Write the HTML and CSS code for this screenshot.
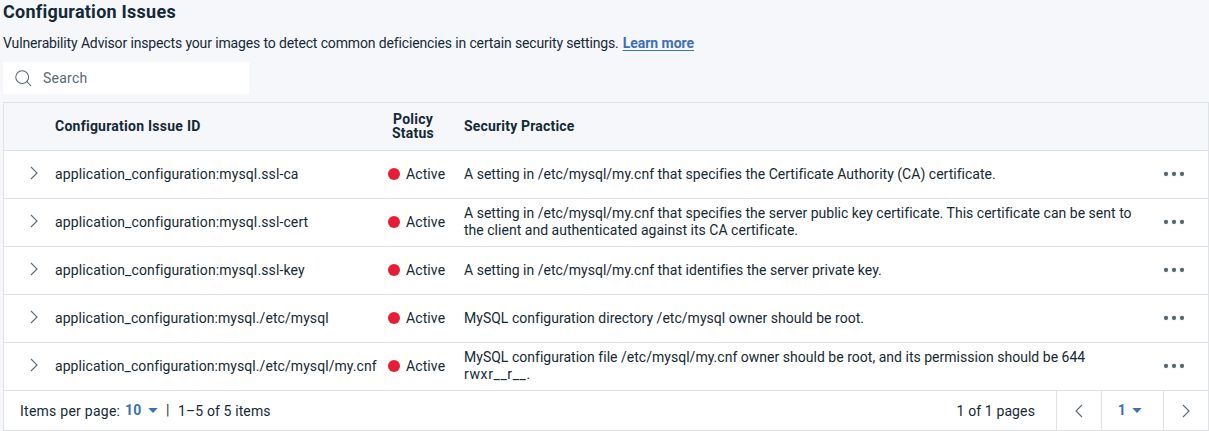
FILE: index.html
```html
<!DOCTYPE html>
<html lang="en">
<head>
<meta charset="utf-8">
<title>Configuration Issues</title>
<link rel="stylesheet" href="styles.css">
</head>
<body>
<svg class="defs" width="0" height="0">
  <symbol id="right" viewBox="0 0 8 14"><path d="M1 1l6 6-6 6"/></symbol>
  <symbol id="left" viewBox="0 0 8 14"><path d="M7 1L1 7l6 6"/></symbol>
  <symbol id="caret" viewBox="0 0 10 5"><path d="M0.3 0h9.4L5 5z"/></symbol>
  <symbol id="dots" viewBox="0 0 22 6"><circle cx="3" cy="3" r="2.15"/><circle cx="11" cy="3" r="2.15"/><circle cx="19" cy="3" r="2.15"/></symbol>
</svg>
<main class="page">
  <h1 class="title">Configuration Issues</h1>
  <p class="intro"><span class="intro-text">Vulnerability Advisor inspects your images to detect common deficiencies in certain security settings.</span><a class="link" href="#">Learn more</a></p>
  <div class="search">
    <svg class="glass" viewBox="0 0 18 18"><circle cx="7.6" cy="7.5" r="6.8"/><path d="M12.4 12.3l4.6 4.6"/></svg>
    <span>Search</span>
  </div>
  <section class="table">
    <div class="row head"><span></span><span>Configuration Issue ID</span><span class="policy">Policy<br>Status</span><span class="practice-head">Security Practice</span><span></span></div>
    <div class="row"><svg class="chev"><use href="#right"/></svg><span class="id">application_configuration:mysql.ssl-ca</span><span class="status">Active</span><span class="practice">A setting in /etc/mysql/my.cnf that specifies the Certificate Authority (CA) certificate.</span><svg class="dots"><use href="#dots"/></svg></div>
    <div class="row"><svg class="chev"><use href="#right"/></svg><span class="id">application_configuration:mysql.ssl-cert</span><span class="status">Active</span><span class="practice double">A setting in /etc/mysql/my.cnf that specifies the server public key certificate. This certificate can be sent to<br>the client and authenticated against its CA certificate.</span><svg class="dots"><use href="#dots"/></svg></div>
    <div class="row"><svg class="chev"><use href="#right"/></svg><span class="id">application_configuration:mysql.ssl-key</span><span class="status">Active</span><span class="practice">A setting in /etc/mysql/my.cnf that identifies the server private key.</span><svg class="dots"><use href="#dots"/></svg></div>
    <div class="row"><svg class="chev"><use href="#right"/></svg><span class="id path">application_configuration:mysql./etc/mysql</span><span class="status">Active</span><span class="practice">MySQL configuration directory /etc/mysql owner should be root.</span><svg class="dots"><use href="#dots"/></svg></div>
    <div class="row"><svg class="chev"><use href="#right"/></svg><span class="id path">application_configuration:mysql./etc/mysql/my.cnf</span><span class="status">Active</span><span class="practice double">MySQL configuration file /etc/mysql/my.cnf owner should be root, and its permission should be 644<br><span class="mode">rwxr__r__.</span></span><svg class="dots"><use href="#dots"/></svg></div>
    <div class="footer">
      <span class="per-page">Items per page:</span><span class="picker size">10<svg class="caret"><use href="#caret"/></svg></span><span class="bar">|</span><span class="range">1–5 of 5 items</span>
      <span class="pages">1 of 1 pages</span>
      <span class="cell prev"><svg class="chev"><use href="#left"/></svg></span>
      <span class="cell current"><span class="picker">1<svg class="caret"><use href="#caret"/></svg></span></span>
      <span class="cell next"><svg class="chev"><use href="#right"/></svg></span>
    </div>
  </section>
</main>
</body>
</html>
```
FILE: styles.css
```css
* { box-sizing: border-box; }
body {
  margin: 0;
  background: #f5f7fb;
  color: #152935;
  font: 14px/17px Roboto, "Liberation Sans", sans-serif;
  letter-spacing: 0.25px;
  white-space: nowrap;
}
.defs { position: absolute; }
.page { display: flex; flex-direction: column; height: 431px; padding-left: 3px; overflow: hidden; }
.title { margin: 0; height: 34px; font-size: 18px; line-height: 24px; font-weight: 700; letter-spacing: 0.25px; }
.intro { display: flex; gap: 4px; margin: 0; height: 28px; line-height: 18px; letter-spacing: -0.14px; }
.link { color: #3d70b2; font-weight: 700; letter-spacing: -0.03px; text-decoration: underline; text-underline-offset: 2px; }
.search { display: flex; align-items: center; gap: 11px; width: 246px; height: 32px; padding-left: 12px; background: #fff; color: #5a6872; }
.glass { width: 17px; height: 17px; fill: none; stroke: #5a6872; stroke-width: 1.1; }
.table { margin-top: 8px; border: 1px solid #dfe3e6; background: #fff; }
.row {
  display: grid;
  grid-template-columns: 51px 333px 76px 698px 1fr;
  align-items: center;
  height: 48px;
  border-bottom: 1px solid #dfe3e6;
}
.head { background: #f5f7fb; font-weight: 700; }
.policy { width: 50px; padding-bottom: 1px; text-align: center; line-height: 14px; }
.practice-head { letter-spacing: 0.18px; }
.id { letter-spacing: 0.12px; }
.path { letter-spacing: 0.07px; }
.practice { letter-spacing: 0.02px; }
.double { padding-bottom: 2px; }
.mode { letter-spacing: 0.6px; }
.chev { display: block; width: 8px; height: 14px; fill: none; stroke: #5a6872; stroke-width: 1.1; }
.row .chev { margin: -3px 0 0 26px; }
.status { display: flex; align-items: center; gap: 6px; letter-spacing: 0.1px; }
.status::before { content: ""; width: 12px; height: 12px; margin-bottom: 1px; border-radius: 50%; background: #e71d32; }
.dots { width: 22px; height: 6px; margin: 0 0 1px 1px; fill: #5a6872; }
.footer { display: flex; align-items: center; height: 39px; padding-left: 16px; }
.per-page { width: 105px; padding-top: 1px; }
.picker { display: flex; align-items: center; gap: 6px; color: #3d70b2; font-weight: 700; }
.size { width: 41px; }
.caret { width: 10px; height: 5px; fill: #3d70b2; }
.bar { width: 12px; }
.range { padding-top: 1px; letter-spacing: 0.12px; }
.pages { margin-left: auto; padding: 1px 21px 0 0; letter-spacing: 0.12px; }
.cell { display: flex; align-items: center; justify-content: center; height: 100%; border-left: 1px solid #dfe3e6; }
.prev { width: 45px; }
.current { width: 62px; padding-right: 5px; }
.next { width: 45px; }
```
